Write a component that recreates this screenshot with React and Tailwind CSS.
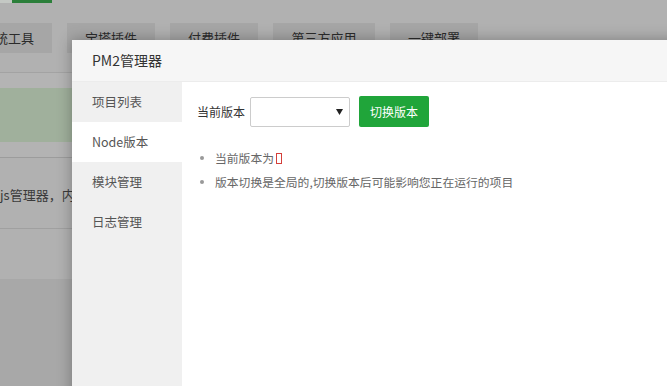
import React from "react";

function Tab({ children, w }) {
  return (
    <div className={`h-[30px] ${w} shrink-0 bg-[#a6a6a6] flex items-center justify-center text-[13px] text-[#2b2b2b]`}>
      {children}
    </div>
  );
}

export default function App() {
  const menu = ["项目列表", "Node版本", "模块管理", "日志管理"];
  return (
    <div className="relative w-[667px] h-[386px] overflow-hidden bg-[#b1b1b1] font-['Noto_Sans_CJK_SC','Microsoft_YaHei',sans-serif]">
      {/* dimmed page behind */}
      <div className="flex flex-col">
        <div className="flex h-[3px]">
          <div className="w-[12px] bg-[#c4c8c4]" />
          <div className="w-[40px] bg-[#2b7f3a]" />
        </div>
        <div className="mt-[20px] flex gap-[15px] ml-[-36px]">
          <Tab w="w-[88px]">系统工具</Tab>
          <Tab w="w-[88px]">宝塔插件</Tab>
          <Tab w="w-[88px]">付费插件</Tab>
          <Tab w="w-[102px]">第三方应用</Tab>
          <Tab w="w-[88px]">一键部署</Tab>
        </div>
        <div className="mt-[19px] h-px bg-[#a3a3a3]" />
        <div className="h-[15px] bg-[#b4b4b4]" />
        <div className="h-[54px] bg-[#a0b09c]" />
        <div className="h-[15px] bg-[#b3b3b3]" />
        <div className="h-px bg-[#9c9c9c]" />
        <div className="h-[70px] w-[72px] overflow-hidden flex items-center pt-[4px] text-[13px] text-[#3a3a3a] whitespace-nowrap">
          js管理器，内置nodejs版本管理
        </div>
        <div className="h-px bg-[#a0a0a0]" />
        <div className="h-[50px] bg-[#b1b1b1]" />
        <div className="h-[120px] bg-[#a8a8a8]" />
      </div>

      {/* modal */}
      <div className="absolute left-[72px] top-[40px] w-[620px] h-[360px] bg-white flex flex-col shadow-[0_0_14px_rgba(0,0,0,0.3)]">
        <div className="h-[42px] shrink-0 bg-[#f6f6f6] border-b border-[#ececec] flex items-center pl-[20px] text-[14px] text-[#333]">
          PM2管理器
        </div>
        <div className="flex flex-1">
          <div className="w-[110px] bg-[#f0f0f0] flex flex-col">
            {menu.map((m, i) => (
              <div
                key={m}
                className={`h-[40px] flex items-center pl-[20px] text-[12.5px] text-[#555] ${i === 1 ? "bg-white" : ""}`}
              >
                {m}
              </div>
            ))}
          </div>
          <div className="flex-1 bg-white pl-[15px] pt-[14px]">
            <div className="flex items-center">
              <span className="text-[12px] text-[#333] mr-[5px]">当前版本</span>
              <div className="w-[100px] h-[30px] border border-[#ccc] rounded-[2px] bg-white flex items-center justify-end pr-[6px]">
                <svg width="7" height="6" viewBox="0 0 7 6">
                  <path d="M0 0 L7 0 L3.5 6 Z" fill="#222" />
                </svg>
              </div>
              <div className="ml-[9px] w-[70px] h-[31px] bg-[#20a53a] rounded-[2px] flex items-center justify-center text-white text-[12px]">
                切换版本
              </div>
            </div>
            <ul className="mt-[19px] text-[11.8px] text-[#666] leading-[24px]">
              <li className="flex items-center">
                <span className="w-[4px] h-[4px] rounded-full bg-[#999] ml-[3px] mr-[11px]" />
                当前版本为
                <span className="inline-block w-[6px] h-[11px] border border-[#d43f3a] ml-[2px]" />
              </li>
              <li className="flex items-center">
                <span className="w-[4px] h-[4px] rounded-full bg-[#999] ml-[3px] mr-[11px]" />
                版本切换是全局的,切换版本后可能影响您正在运行的项目
              </li>
            </ul>
          </div>
        </div>
      </div>
    </div>
  );
}
